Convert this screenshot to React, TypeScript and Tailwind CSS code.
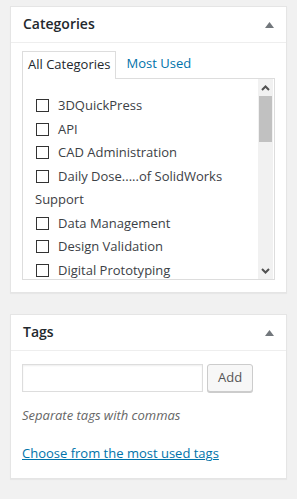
import { useState } from "react";

const categories: { name: string; check: boolean }[] = [
  { name: "3DQuickPress", check: true },
  { name: "API", check: true },
  { name: "CAD Administration", check: true },
  { name: "Daily Dose.....of SolidWorks", check: true },
  { name: "Support", check: false },
  { name: "Data Management", check: true },
  { name: "Design Validation", check: true },
  { name: "Digital Prototyping", check: true },
];

function Toggle() {
  return (
    <svg width="9" height="6" viewBox="0 0 9 6" className="shrink-0">
      <path d="M4.5 0 L9 6 L0 6 Z" fill="#72777c" />
    </svg>
  );
}

function Chevron({ up }: { up?: boolean }) {
  return (
    <svg width="9" height="6" viewBox="0 0 9 6">
      <path
        d={up ? "M1 5 L4.5 1.5 L8 5" : "M1 1 L4.5 4.5 L8 1"}
        fill="none"
        stroke="#505050"
        strokeWidth="2"
      />
    </svg>
  );
}

function Postbox({ title, children }: { title: string; children: React.ReactNode }) {
  return (
    <div className="bg-white border border-[#e5e5e5] shadow-[0_1px_1px_rgba(0,0,0,0.04)]">
      <div className="h-[36px] flex items-center justify-between pl-[12px] pr-[12px] border-b border-[#eeeeee]">
        <h2 className="text-[14px] font-semibold text-[#23282d] leading-none -mt-[2px]">{title}</h2>
        <Toggle />
      </div>
      {children}
    </div>
  );
}

export default function App() {
  const [tab, setTab] = useState(0);
  return (
    <div
      className="min-h-[499px] bg-[#f1f1f1] px-[10px] pt-[6px] flex flex-col gap-[21px]"
      style={{ fontFamily: "'Open Sans', sans-serif" }}
    >
      <Postbox title="Categories">
        <div className="px-[11px] pt-[8px] pb-[12px]">
          <div className="flex items-end text-[13px]">
            <button
              onClick={() => setTab(0)}
              className="h-[28px] px-[5px] pb-[2px] border border-b-0 border-[#dddddd] bg-white text-[#23282d] -mb-px relative z-10"
            >
              All Categories
            </button>
            <button onClick={() => setTab(1)} className="h-[27px] pb-[2px] px-[10px] text-[#0073aa]">
              Most Used
            </button>
          </div>
          <div className="h-[202px] border border-[#dddddd] flex overflow-hidden">
            <ul className="flex-1 pt-[15px] pl-[13px] text-[13px] text-[#3c4146]">
              {categories.map((c) => (
                <li key={c.name} className="h-[23.5px] flex items-center">
                  {c.check ? (
                    <label className="flex items-center gap-[9px]">
                      <span className="w-[13px] h-[13px] border border-[#333333] bg-white shrink-0" />
                      {c.name}
                    </label>
                  ) : (
                    <span className="-ml-px">{c.name}</span>
                  )}
                </li>
              ))}
            </ul>
            <div className="w-[15px] mr-px bg-[#f1f1f1] flex flex-col">
              <div className="h-[17px] flex items-center justify-center">
                <Chevron up />
              </div>
              <div className="h-[46px] mx-px bg-[#c1c1c1]" />
              <div className="flex-1" />
              <div className="h-[17px] flex items-center justify-center">
                <Chevron />
              </div>
            </div>
          </div>
          {tab === 1 && null}
        </div>
      </Postbox>

      <Postbox title="Tags">
        <div className="px-[11px] pt-[13px] pb-[15px]">
          <div className="flex items-center gap-[4px]">
            <input
              type="text"
              className="w-[181px] h-[28px] border border-[#dddddd] shadow-[inset_0_1px_2px_rgba(0,0,0,0.07)] outline-none px-[6px] text-[13px]"
            />
            <button className="h-[28px] px-[10px] rounded-[3px] border border-[#cccccc] bg-[#f7f7f7] shadow-[0_1px_0_#cccccc] text-[13px] text-[#555555]">
              Add
            </button>
          </div>
          <p className="mt-[13px] text-[13px] italic text-[#666666] leading-[20px]">
            Separate tags with commas
          </p>
          <a
            href="#"
            className="block mt-[18px] text-[13px] text-[#0073aa] underline leading-[20px]"
          >
            Choose from the most used tags
          </a>
        </div>
      </Postbox>
    </div>
  );
}
